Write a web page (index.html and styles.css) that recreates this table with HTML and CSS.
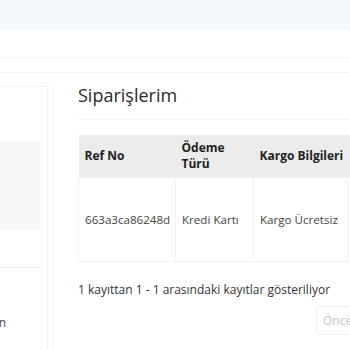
FILE: index.html
```html
<!DOCTYPE html>
<html lang="tr">
<head>
<meta charset="utf-8">
<title>Siparişlerim</title>
<link rel="stylesheet" href="styles.css">
</head>
<body>
<div class="topbar"></div>
<div class="subbar"></div>
<div class="layout">
  <aside class="sidebar">
    <div class="sb-box"></div>
    <div class="sb-line"></div>
    <div class="sb-item"><span>Çıkış yapın</span></div>
  </aside>
  <main class="content">
    <h2 class="title">Siparişlerim</h2>
    <div class="table-wrap">
      <table class="orders">
        <thead>
          <tr>
            <th class="c-ref">Ref No</th>
            <th class="c-pay">Ödeme Türü</th>
            <th class="c-ship">Kargo Bilgileri</th>
            <th class="c-more">Tutar</th>
          </tr>
        </thead>
        <tbody>
          <tr>
            <td>663a3ca86248d</td>
            <td>Kredi Kartı</td>
            <td>Kargo Ücretsiz</td>
            <td>0,00 TL</td>
          </tr>
        </tbody>
      </table>
    </div>
    <p class="info">1 kayıttan 1 - 1 arasındaki kayıtlar gösteriliyor</p>
    <div class="pager">
      <button class="pg-btn" type="button">Önceki</button>
    </div>
  </main>
</div>
</body>
</html>
```
FILE: styles.css
```css
html, body {
  margin: 0;
  padding: 0;
  background: #ffffff;
  font-family: "Open Sans", "Liberation Sans", sans-serif;
  color: #333333;
  overflow: hidden;
}

.topbar {
  height: 30px;
  background: #f4f7fb;
}

.subbar {
  margin-top: 27px;
  height: 14px;
  border-top: 1px solid #f3f3f3;
  border-bottom: 1px solid #f3f3f3;
}

.layout {
  margin-top: 13px;
  display: flex;
  align-items: flex-start;
}

.sidebar {
  width: 48px;
  flex: 0 0 48px;
  height: 300px;
  border-top: 1px solid #f3f3f3;
  border-right: 1px solid #f0f0f0;
  overflow: hidden;
  box-sizing: border-box;
}

.sb-box {
  margin-top: 54px;
  width: 40px;
  height: 89px;
  background: #f7f7f7;
}

.sb-line {
  margin-top: 37px;
  width: 40px;
  border-top: 1px solid #f0f0f0;
}

.sb-item {
  margin-top: 46px;
  display: flex;
  justify-content: flex-end;
  width: 6px;
  font-size: 12px;
  color: #444;
  white-space: nowrap;
}

.content {
  flex: 1;
  margin-left: 5px;
  padding-left: 24px;
  border-left: 1px solid #f5f5f5;
  min-height: 300px;
}

.title {
  margin: 0;
  font-size: 18px;
  font-weight: 400;
  line-height: 19px;
  color: #2b2b2b;
}

.table-wrap {
  margin-top: 14px;
  padding-top: 15px;
  border-top: 1px solid #f5f5f5;
}

.orders {
  border-collapse: collapse;
  table-layout: fixed;
  width: 360px;
}

.orders th {
  background: #ebebeb;
  font-size: 12px;
  font-weight: 700;
  color: #222;
  text-align: left;
  height: 42px;
  padding: 0 6px;
  line-height: 16px;
  white-space: nowrap;
}

.orders th.c-pay {
  white-space: normal;
}

.c-ref { width: 85px; }
.c-pay { width: 66px; }
.c-ship { width: 82px; }
.c-more { width: 79px; }

.orders td {
  font-size: 11.6px;
  color: #444;
  height: 83px;
  padding: 0 6px;
  border: 1px solid #f2f2f2;
  white-space: nowrap;
}

.info {
  margin: 19px 0 0;
  font-size: 12px;
  line-height: 18px;
  color: #333;
}

.pager {
  display: flex;
  justify-content: flex-end;
  margin-top: 7px;
  width: 360px;
}

.pg-btn {
  font-family: inherit;
  font-size: 12px;
  color: #c4c4c4;
  background: #fff;
  border: 1px solid #eeeeee;
  border-radius: 4px;
  height: 29px;
  padding: 0 6px;
  width: 122px;
  text-align: left;
}
```
